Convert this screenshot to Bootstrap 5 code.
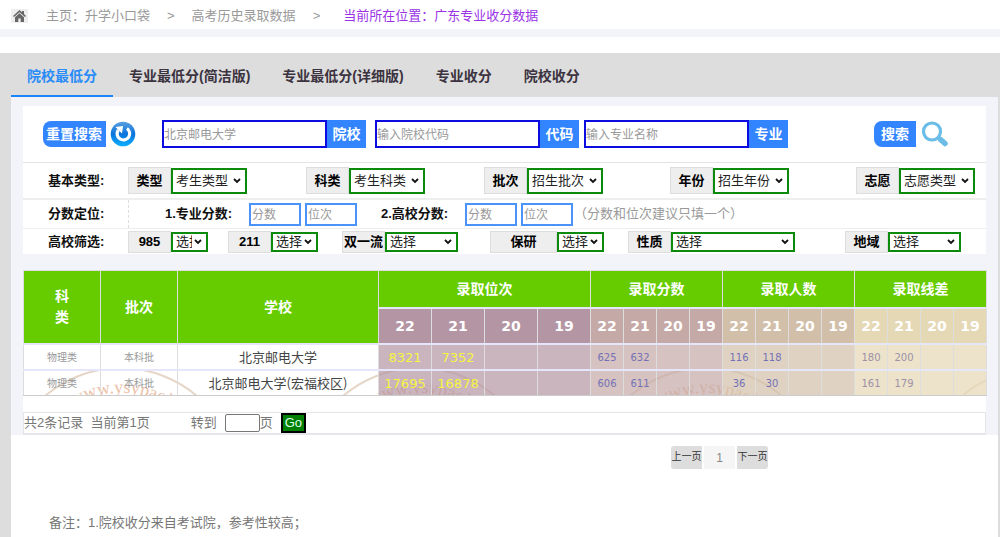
<!DOCTYPE html>
<html lang="zh-CN">
<head>
<meta charset="utf-8">
<meta name="viewport" content="width=device-width, initial-scale=1">
<title>广东专业收分数据</title>
<link href="https://cdn.jsdelivr.net/npm/bootstrap@5.3.0/dist/css/bootstrap.min.css" rel="stylesheet">
<style>
  body { font: 13px/20px "Liberation Sans", "Noto Sans CJK SC", sans-serif; color: #777; }
  .crumbs { height: 29px; padding: 3px 11px 0; color: #999; }
  .crumbs a { color: #999; }
  .crumbs .home { width: 17px; height: 14px; background: #eee; margin-right: 18px; }
  .crumbs .sep { margin: 0 17px; }
  .crumbs .here { color: #9a32e6; margin-left: 6px; }
  .strip { height: 8px; background: #f3f3fa; margin-bottom: 16px; }
  .shell { background: #ddd; padding: 0 2px 0 11px; }
  .tabs { --bs-nav-link-padding-x: 16px; --bs-nav-link-padding-y: 0; }
  .tabs .nav-link { font-size: 14px; line-height: 42px; padding-top: 2px; height: 44px; font-weight: 600; color: #3c3340; border-bottom: 2px solid transparent; }
  .tabs .nav-link.active { color: #2a8cf8; border-color: #1b86fb; }
  .tinted { background: #f3f3fa; padding: 9px 12px 0; }
  .filters > div { display: grid; align-items: center; }
  .r-search { grid-template-columns: 139px 213fr 209fr 290fr 112px; height: 57px; border-bottom: 1px solid #e4e4e4; }
  .r-basic { grid-template-columns: 105px 178fr 178fr 186fr 186fr 130fr; height: 37px; border-bottom: 2px solid #eee; }
  .r-score { grid-template-columns: 105px 1fr; height: 29px; border-bottom: 1px solid #eee; }
  .r-school { grid-template-columns: 105px 100fr 114fr 148fr 138fr 217fr 141fr; height: 25px; }
  .row-title { font-weight: 700; color: #111; padding-left: 25px; }
  .score-part { height: 28px; border-left: 1px dashed #ddd; padding-left: 36px; color: #111; white-space: nowrap; }
  .score-part label { width: 68px; }
  .score-hint { color: #999; padding-left: 1px; }
  .act { background: #3385ff; color: #fff; border: 0; font-weight: 600; font-size: 14px; height: 26px; padding: 0 4px 0 3px; border-radius: 8px 0 0 8px; line-height: 26px; }
  .act.find { padding: 0 7px; }
  .key { width: 165px; height: 28px; border: 2px solid #0c0ce0; padding: 2px 0 0; font-size: 12px; }
  .key-name { width: 39px; text-align: center; height: 28px; line-height: 28px; background: #3385ff; color: #fff; font-size: 14px; font-weight: 700; }
  input::placeholder { color: #999; opacity: 1; }
  .tag { width: 43px; height: 27px; background: #eee; border: 1px solid #ddd; color: #000; font-weight: 700; text-align: center; line-height: 26px; white-space: nowrap; }
  .r-school .tag { height: 22px; line-height: 19px; }
  .tag.wide { width: 67px; }
  .pick { appearance: none; width: 76px; height: 26px; border: 2px solid #0b8a0b; color: #222; font-size: 13px; line-height: 20px; padding: 0 14px 0 3px; border-radius: 0;
    background: #fff url("data:image/svg+xml,%3Csvg xmlns='http://www.w3.org/2000/svg' viewBox='0 0 8 6'%3E%3Cpath d='m1 1 3 3 3-3' fill='none' stroke='%23111' stroke-width='1.800'/%3E%3C/svg%3E") no-repeat right 4px center / 8px 6px; }
  .r-school .pick { height: 20px; line-height: 16px; }
  .r-school .w-a { width: 37px; } .r-school .w-b { width: 47px; } .r-school .w-c { width: 73px; } .r-school .w-d { width: 124px; }
  .num { width: 52px; height: 23px; border: 2px solid #4a93f8; padding: 1px 1px 0; font-size: 12px; }
  .results { margin-top: 16px; background: #fff; }
  .grades { width: 100%; table-layout: fixed; border-collapse: collapse; text-align: center; border: 1px solid #ddd; }
  .grades th, .grades td { padding: 0; border: 1px solid #ddd; border-bottom: 2px solid #e6e6fa; }
  .grades tbody tr:last-child td { border-bottom: 1px solid #ccc; }
  .grades th { background: #6c0; color: #fff; font-size: 14px; font-weight: 700; line-height: 21px; padding-top: 1px; }
  .grades tr.top { height: 37px; }
  .grades tr.years { height: 36px; }
  .grades tr.years th { font: 700 14px/20px "DejaVu Sans", sans-serif; }
  .grades tbody tr { height: 26px; }
  .grades td { font: 10px/20px "DejaVu Sans", "Noto Sans CJK SC", sans-serif; color: #7370b5; padding-top: 2px; }
  .grades td.dim { color: #999; }
  .grades td.name { font: 13px/20px "Noto Sans CJK SC", sans-serif; color: #444; padding: 0; }
  .grades td.rank { font-size: 13px; color: #f5f53e; }
  .grades tr.years .g1 { background: #b495a3; } .grades tr.years .g2 { background: #c5a9a6; }
  .grades tr.years .g3 { background: #d2bfa9; } .grades tr.years .g4 { background: #e5d8b5; }
  .grades td:nth-child(n+4) { background: rgba(180,149,163,.7); }
  .grades td:nth-child(n+8) { background: rgba(197,169,166,.7); }
  .grades td:nth-child(n+12) { background: rgba(210,191,169,.7); }
  .grades td:nth-child(n+16) { background: rgba(229,216,181,.72); color: #a090a8; }
  .c-kind { width: 77px; } .c-name { width: 201px; } .c-rank { width: 53px; } .c-val { width: 33px; }
  .stamp { left: 0; bottom: 1px; width: 100%; }
  .jump { margin-top: 16px; height: 23px; border: 1px solid #e6e6ea; border-width: 1px 1px 2px; white-space: nowrap; }
  .jump .turn { margin: 0 8px 0 41px; }
  .jump input { width: 35px; height: 18px; border: 1px solid #777; border-radius: 2px; }
  .jump button { height: 20px; border: 2px solid #000; background: #008000; color: #dfe; padding: 0 2px; line-height: 16px; }
  .lower { background: #fff; min-height: 103px; padding: 11px 230px 0 38px; }
  .pages { gap: 2px; font-size: 10px; }
  .pages a { display: block; width: 31px; height: 23px; background: #ddd; color: #333; text-align: center; text-decoration: none; line-height: 22px; border-radius: 3px 0 0 3px; white-space: nowrap; }
  .pages li:last-child a { border-radius: 0 3px 3px 0; }
  .pages a.now { background: #f5f5f5; color: #888; font-size: 12px; line-height: 25px; border-radius: 0; }
  .remark { margin: 44px 0 4px; white-space: nowrap; }
</style>
</head>
<body>
<nav class="crumbs d-flex align-items-center" aria-label="位置">
  <a class="home d-flex justify-content-center align-items-center" href="#" aria-label="首页"><svg width="13" height="12" viewBox="0 0 13 12"><path fill="#666" d="M6.500 0 0 6l1 1L6.500 2.200 12 7l1-1-2-2V1H9v1.300zM2 7.200V12h3.300V8.500h2.400V12H11V7.200L6.500 3.200z"/></svg></a>
  <a class="text-decoration-none" href="#">主页：升学小口袋</a><span class="sep">&gt;</span>
  <a class="text-decoration-none" href="#">高考历史录取数据</a><span class="sep">&gt;</span>
  <span class="here">当前所在位置：广东专业收分数据</span>
</nav>
<div class="strip"></div>
<main class="shell">
  <ul class="nav tabs">
    <li><a class="nav-link active" href="#">院校最低分</a></li>
    <li><a class="nav-link" href="#">专业最低分(简洁版)</a></li>
    <li><a class="nav-link" href="#">专业最低分(详细版)</a></li>
    <li><a class="nav-link" href="#">专业收分</a></li>
    <li><a class="nav-link" href="#">院校收分</a></li>
  </ul>
  <div class="tinted">
    <form class="filters bg-white">
      <div class="r-search">
        <div class="d-flex align-items-center gap-1 ps-3 ms-1">
          <button type="reset" class="act">重置搜索</button>
          <svg width="26" height="26" viewBox="0 0 26 26"><defs><linearGradient id="orb" x1="0" y1="0" x2="0" y2="1"><stop offset="0" stop-color="#5a9fe0"/><stop offset=".5" stop-color="#0b74dc"/><stop offset="1" stop-color="#0bb0ff"/></linearGradient></defs><circle cx="13" cy="13" r="12.300" fill="url(#orb)"/><path d="M17 7.500A6.300 6.300 0 1 1 8.300 9" fill="none" stroke="#fff" stroke-width="3.200"/><path d="M5.500 6 13 5l-1 7.500z" fill="#fff"/></svg>
        </div>
        <div class="d-flex"><input class="key" id="k1" placeholder="北京邮电大学"><label class="key-name" for="k1">院校</label></div>
        <div class="d-flex"><input class="key" id="k2" placeholder="输入院校代码"><label class="key-name" for="k2">代码</label></div>
        <div class="d-flex"><input class="key" id="k3" placeholder="输入专业名称"><label class="key-name" for="k3">专业</label></div>
        <div class="d-flex align-items-center gap-1">
          <button type="submit" class="act find">搜索</button>
          <svg width="29" height="26" viewBox="0 0 29 26"><circle cx="12" cy="10.500" r="8.500" fill="none" stroke="#6bbde8" stroke-width="3.200"/><path d="m20.500 18.500 4.500 4" stroke="#6bbde8" stroke-width="5.500" stroke-linecap="round"/></svg>
        </div>
      </div>
      <div class="r-basic">
        <div class="row-title">基本类型:</div>
        <div class="d-flex align-items-center"><label class="tag" for="s1">类型</label><select class="pick" id="s1"><option>考生类型</option></select></div>
        <div class="d-flex align-items-center"><label class="tag" for="s2">科类</label><select class="pick" id="s2"><option>考生科类</option></select></div>
        <div class="d-flex align-items-center"><label class="tag" for="s3">批次</label><select class="pick" id="s3"><option>招生批次</option></select></div>
        <div class="d-flex align-items-center"><label class="tag" for="s4">年份</label><select class="pick" id="s4"><option>招生年份</option></select></div>
        <div class="d-flex align-items-center"><label class="tag" for="s5">志愿</label><select class="pick" id="s5"><option>志愿类型</option></select></div>
      </div>
      <div class="r-score">
        <div class="row-title">分数定位:</div>
        <div class="score-part d-flex align-items-center">
          <label class="fw-bold" for="n1">1.专业分数:</label>
          <input class="num ms-3" id="n1" placeholder="分数"><input class="num ms-1" placeholder="位次" aria-label="专业位次">
          <label class="fw-bold ms-4" for="n3">2.高校分数:</label>
          <input class="num ms-3" id="n3" placeholder="分数"><input class="num ms-1" placeholder="位次" aria-label="高校位次">
          <span class="score-hint">（分数和位次建议只填一个）</span>
        </div>
      </div>
      <div class="r-school">
        <div class="row-title">高校筛选:</div>
        <div class="d-flex align-items-center"><label class="tag" for="t1">985</label><select class="pick w-a" id="t1"><option>选择</option></select></div>
        <div class="d-flex align-items-center"><label class="tag" for="t2">211</label><select class="pick w-b" id="t2"><option>选择</option></select></div>
        <div class="d-flex align-items-center"><label class="tag" for="t3">双一流</label><select class="pick w-c" id="t3"><option>选择</option></select></div>
        <div class="d-flex align-items-center"><label class="tag wide" for="t4">保研</label><select class="pick w-b" id="t4"><option>选择</option></select></div>
        <div class="d-flex align-items-center"><label class="tag" for="t5">性质</label><select class="pick w-d" id="t5"><option>选择</option></select></div>
        <div class="d-flex align-items-center"><label class="tag" for="t6">地域</label><select class="pick w-c" id="t6"><option>选择</option></select></div>
      </div>
    </form>
    <div class="results">
      <div class="position-relative">
        <svg class="stamp position-absolute" viewBox="0 0 963 26" fill="none">
          <defs><g id="seal"><circle cx="0" cy="116" r="117" stroke="#e6d6c8" stroke-width="2"/><path id="rim" d="M-60 46A92 92 0 0 1 60 46"/><text font-family="Liberation Serif" font-size="18" fill="#ecc0a6" text-anchor="middle"><textPath href="#rim" startOffset="50%">www.ysypaol</textPath></text></g></defs>
          <use href="#seal" x="98"/><use href="#seal" x="396"/><use href="#seal" x="683"/><use href="#seal" x="1015"/>
        </svg>
        <table class="grades position-relative">
          <colgroup><col class="c-kind"><col class="c-kind"><col class="c-name"><col class="c-rank" span="4"><col class="c-val" span="12"></colgroup>
          <thead>
            <tr class="top"><th rowspan="2">科<br>类</th><th rowspan="2">批次</th><th rowspan="2">学校</th><th colspan="4">录取位次</th><th colspan="4">录取分数</th><th colspan="4">录取人数</th><th colspan="4">录取线差</th></tr>
            <tr class="years"><th class="g1">22</th><th class="g1">21</th><th class="g1">20</th><th class="g1">19</th><th class="g2">22</th><th class="g2">21</th><th class="g2">20</th><th class="g2">19</th><th class="g3">22</th><th class="g3">21</th><th class="g3">20</th><th class="g3">19</th><th class="g4">22</th><th class="g4">21</th><th class="g4">20</th><th class="g4">19</th></tr>
          </thead>
          <tbody>
            <tr><td class="dim">物理类</td><td class="dim">本科批</td><td class="name">北京邮电大学</td><td class="rank">8321</td><td class="rank">7352</td><td></td><td></td><td>625</td><td>632</td><td></td><td></td><td>116</td><td>118</td><td></td><td></td><td>180</td><td>200</td><td></td><td></td></tr>
            <tr><td class="dim">物理类</td><td class="dim">本科批</td><td class="name">北京邮电大学(宏福校区)</td><td class="rank">17695</td><td class="rank">16878</td><td></td><td></td><td>606</td><td>611</td><td></td><td></td><td>36</td><td>30</td><td></td><td></td><td>161</td><td>179</td><td></td><td></td></tr>
          </tbody>
        </table>
      </div>
      <form class="jump d-flex align-items-center">
        <span>共2条记录&nbsp; 当前第1页</span>
        <label class="turn" for="pg">转到</label><input id="pg"><span class="me-2">页</span><button type="submit">Go</button>
      </form>
    </div>
  </div>
  <div class="lower">
    <ul class="pages list-unstyled d-flex justify-content-end m-0">
      <li><a href="#">上一页</a></li><li><a class="now" href="#">1</a></li><li><a href="#">下一页</a></li>
    </ul>
    <p class="remark">备注：1.院校收分来自考试院，参考性较高；</p>
  </div>
</main>
</body>
</html>
